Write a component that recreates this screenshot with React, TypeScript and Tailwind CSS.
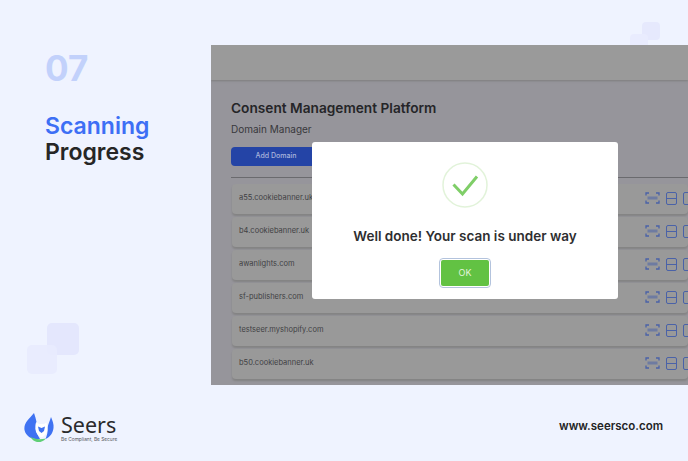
const domains = [
  "a55.cookiebanner.uk",
  "b4.cookiebanner.uk",
  "awanlights.com",
  "sf-publishers.com",
  "testseer.myshopify.com",
  "b50.cookiebanner.uk",
];

function ScanIcon() {
  return (
    <svg width="15" height="12" viewBox="0 0 15 12" fill="none" stroke="#4a62a8" strokeWidth="1.300" className="shrink-0">
      <path d="M1 3.500V1h3M11 1h3v2.500M1 8.500V11h3M11 11h3V8.500" />
      <rect x="2.500" y="4.500" width="10" height="3" fill="#4a62a8" opacity="0.55" stroke="none" />
    </svg>
  );
}

function DomainRow({ name }: { name: string }) {
  return (
    <div className="ml-px flex h-[30px] shrink-0 items-center justify-between rounded-sm bg-[#999999] pb-[2px] pl-[7px] shadow-[0_2px_2px_#838383]">
      <span className="text-[7.500px] text-[#414144]">{name}</span>
      <div className="flex w-[43px] shrink-0 items-center gap-[6px] overflow-hidden">
        <ScanIcon />
        <div className="flex h-[13px] w-[11px] shrink-0 flex-col rounded-[2px] border-[1.500px] border-[#4a62a8] pt-[5px]">
          <div className="h-[1.500px] shrink-0 bg-[#4a62a8]" />
        </div>
        <div className="h-[13px] w-[11px] shrink-0 rounded-[2px] border-[1.500px] border-[#4a62a8]" />
      </div>
    </div>
  );
}

function SeersLogo() {
  return (
    <svg width="30" height="30" viewBox="0 0 30 30" className="shrink-0">
      {/* left wing */}
      <path d="M10 0C11 3 12 6 12.500 9 11 11 11 15 12.500 19 13.500 22 15 24 16 26 9 27 2 24 .5 17-.5 10 5 6 10 0Z" fill="#3f72f2" />
      {/* right wing */}
      <path d="M27 4C28.500 8 30 11 29.500 15 29 20 26 24 21.500 26 23 22 24 19 23.500 15.500 24 11 26 8 27 4Z" fill="#3f72f2" />
      {/* green base */}
      <path d="M6 23.500C10 26 15 27 22 25.500 19 28.500 16 29.500 13 29 10 28.500 8 26.500 6 23.500Z" fill="#5fcf76" />
      {/* owl head */}
      <path d="M12.500 9.500 15 11h5l2.500-1.500 1 6c0 4-2.500 7.500-6 9-3.500-1.500-6-5-6-9l1-6Z" fill="#ffffff" />
      <path d="M14 13.500 17.500 15 21 13.500 20 18l-2.500 2-2.500-2-1-4.500Z" fill="#3f72f2" />
    </svg>
  );
}

export default function App() {
  return (
    <div className="relative flex h-[461px] w-[688px] flex-col overflow-hidden bg-[#eff3ff] font-['Inter',sans-serif]">
      {/* decorative squares */}
      <div className="absolute left-[47px] top-[323px] h-[32px] w-[32px] rounded-[5px] bg-[#e4e7fd]" />
      <div className="absolute left-[27px] top-[345px] h-[29px] w-[30px] rounded-[5px] bg-[#e8ebfe]/90" />
      <div className="absolute left-[642px] top-[22px] h-[18px] w-[18px] rounded-[4px] bg-[#e6e9fd]" />
      <div className="absolute left-[630px] top-[34px] h-[11px] w-[18px] rounded-t-[4px] bg-[#e9ecfe]" />

      <div className="flex h-[385px] shrink-0">
        <div className="flex w-[211px] shrink-0 flex-col pl-[45px] pt-[45px]">
          <div className="text-[35px] font-bold leading-[46px] text-[#c2d1fb]">07</div>
          <div className="mt-[22px] text-[23px] font-semibold leading-[26px] text-[#3d6ff5]">Scanning</div>
          <div className="text-[23px] font-semibold leading-[26px] text-[#262626]">Progress</div>
        </div>

        <div className="relative mt-[45px] flex min-w-0 flex-1 flex-col overflow-hidden bg-[#96959b]">
          <div className="h-[35px] shrink-0 bg-[#9a9a9a] shadow-[0_1px_2px_#7d7d7d]" />
          <div className="flex min-h-0 flex-1 flex-col pl-[20px] pt-[18px]">
            <h1 className="text-[13.700px] font-semibold leading-[20px] text-[#252528]">Consent Management Platform</h1>
            <p className="mt-[4px] text-[10px] leading-[14px] text-[#38383b]">Domain Manager</p>
            <div className="mt-[11px] flex h-[19px] w-[90px] items-center justify-center rounded-sm bg-[#2444a6] text-[7px] font-medium text-[#a9b5dc]">
              Add Domain
            </div>
            <div className="mt-[11px] h-px shrink-0 bg-[#6a6a6e]" />
            <div className="mt-[6px] flex flex-col gap-[3px]">
              {domains.map((d) => (
                <DomainRow key={d} name={d} />
              ))}
            </div>
          </div>

          {/* modal */}
          <div className="absolute left-[101px] top-[97px] flex h-[157px] w-[306px] flex-col items-center rounded-[3px] bg-white pt-[20px]">
            <svg width="46" height="46" viewBox="0 0 46 46" fill="none">
              <circle cx="23" cy="23" r="22" stroke="#e2f3da" strokeWidth="1.500" />
              <path d="M11.500 22.500 20.500 32 35 14.500" stroke="#7fce68" strokeWidth="3" />
            </svg>
            <p className="mt-[19px] text-[13.500px] font-semibold leading-[18px] text-[#2e2e30]">Well done! Your scan is under way</p>
            <button
              type="button"
              className="mt-[15px] h-[26px] w-[48px] rounded-[2px] bg-[#62c243] text-[9px] text-[#e4f5dd] outline outline-offset-1 outline-[#b3c3dd]"
            >
              OK
            </button>
          </div>
        </div>
      </div>

      <footer className="flex flex-1 items-center justify-between pl-[24px] pr-[25px] pt-[8px]">
        <div className="flex items-center gap-[7px] pt-[2px]">
          <SeersLogo />
          <div className="flex flex-col">
            <span className="font-['Noto_Sans',sans-serif] text-[21.500px] leading-[20px] text-[#2a2a2c]">Seers</span>
            <span className="mt-px text-[4.800px] leading-[6px] text-[#55555a]">Be Compliant, Be Secure</span>
          </div>
        </div>
        <span className="text-[11.500px] font-semibold text-[#232325]">www.seersco.com</span>
      </footer>
    </div>
  );
}
